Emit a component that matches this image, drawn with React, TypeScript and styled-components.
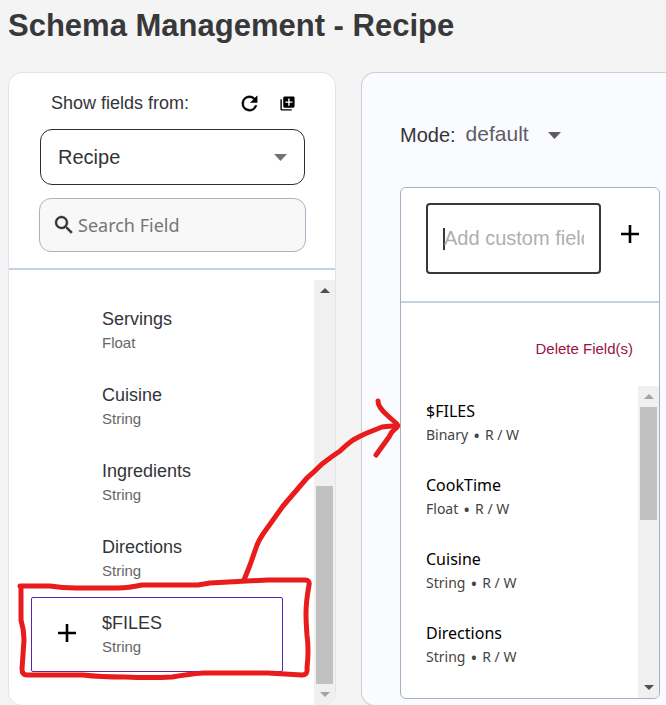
import React from "react";
import styled, { createGlobalStyle } from "styled-components";

const GlobalStyle = createGlobalStyle`
  *, *::before, *::after { box-sizing: border-box; }
  body {
    margin: 0;
    background: #f4f4f4;
    color: #343438;
    font-family: "Liberation Sans", Arial, sans-serif;
  }
  h1, p, ul { margin: 0; padding: 0; }
  button, input, select { font: inherit; color: inherit; margin: 0; }
`;

const Page = styled.div`
  position: relative;
  display: flex;
  flex-direction: column;
  height: 100vh;
  padding-left: 8px;
  overflow: hidden;
`;

const Title = styled.h1`
  flex: none;
  height: 72px;
  padding-top: 8px;
  font-size: 31px;
  line-height: 36px;
  font-weight: 700;
  color: #38383a;
`;

const Columns = styled.div`
  display: grid;
  grid-template-columns: 328px minmax(0, 1fr);
  gap: 25px;
  flex: none;
  height: calc(100vh - 71px);
`;

const SourcePanel = styled.aside`
  display: flex;
  flex-direction: column;
  min-height: 0;
  overflow: hidden;
  background: #fff;
  border: 1px solid #e3e2f1;
  border-radius: 14px;
`;

const SourceHeader = styled.div`
  display: flex;
  flex-direction: column;
  padding: 16px 29px 16px 30px;
  border-bottom: 2px solid #c7d2df;
`;

const SourceTools = styled.div`
  display: flex;
  align-items: center;
  height: 28px;
  padding: 0 7px 0 12px;
  font-size: 18px;
`;

const ToolLabel = styled.label`
  flex: 1;
`;

const IconButton = styled.button<{ $size: number }>`
  display: flex;
  align-items: center;
  justify-content: center;
  flex: none;
  width: ${(p) => p.$size}px;
  height: ${(p) => p.$size}px;
  padding: 0;
  border: 0;
  background: none;
  color: #000;
  cursor: pointer;
`;

const ToolGroup = styled.div`
  display: flex;
  gap: 14px;
`;

const SelectBox = styled.div`
  display: grid;
  align-items: center;
  height: 56px;
  margin: 12px 1px 13px;
  color: #737373;

  > * { grid-area: 1 / 1; }
  > svg { justify-self: end; margin-right: 18px; pointer-events: none; }
`;

const SourceSelect = styled.select`
  appearance: none;
  width: 100%;
  height: 100%;
  padding: 0 40px 0 17px;
  border: 1px solid #263030;
  border-radius: 12px;
  background: #fff;
  color: #343438;
  font-size: 20px;
`;

const SearchBox = styled.label`
  display: flex;
  align-items: center;
  height: 54px;
  gap: 2px;
  padding: 0 12px;
  border: 1px solid #a8b2c3;
  border-radius: 12px;
  background: #f8f8f8;
`;

const SearchInput = styled.input`
  flex: 1;
  min-width: 0;
  padding: 0;
  border: 0;
  outline: 0;
  background: none;
  font-family: "Noto Sans", sans-serif;
  font-size: 18px;
  &::placeholder { color: #767676; opacity: 1; }
`;

const ScrollArea = styled.div<{ $top: number }>`
  display: flex;
  flex: 1;
  min-height: 0;
  margin-top: ${(p) => p.$top}px;
`;

const SourceList = styled.ul`
  display: flex;
  flex-direction: column;
  gap: 1px;
  flex: 1;
  min-width: 0;
  padding: 13px 31px 0 22px;
  overflow: hidden;
  list-style: none;
`;

const SourceRow = styled.li<{ $selected?: boolean }>`
  display: grid;
  grid-template-columns: 70px minmax(0, 1fr);
  align-items: center;
  flex: none;
  height: 75px;
  border: 1px solid ${(p) => (p.$selected ? "#5a24b0" : "transparent")};
  border-radius: 2px;

  > div { grid-column: 2; }
  > button { justify-self: center; margin-bottom: 4px; }
`;

const SourceName = styled.p`
  font-size: 18px;
  line-height: 24px;
`;

const SourceType = styled.p`
  font-size: 15px;
  line-height: 24px;
  color: #666;
`;

const Track = styled.div`
  display: flex;
  flex-direction: column;
  flex: none;
  width: 21px;
  background: #f0f0f0;
`;

const TrackButton = styled.button<{ $dim?: boolean }>`
  display: flex;
  align-items: center;
  justify-content: center;
  flex: none;
  height: 21px;
  padding: 0;
  border: 0;
  background: none;
  color: ${(p) => (p.$dim ? "#a3a3a3" : "#505050")};
`;

const TrackSpace = styled.div<{ $grow: number }>`
  flex: ${(p) => p.$grow} 1 0;
`;

const Thumb = styled.div<{ $grow: number }>`
  flex: ${(p) => p.$grow} 1 0;
  margin: 0 2px;
  background: #c1c1c1;
`;

const SchemaPanel = styled.main`
  display: flex;
  flex-direction: column;
  min-height: 0;
  padding: 46px 6px 6px 38px;
  background: #fafbff;
  border: 1px solid #cfcfd3;
  border-right: 0;
  border-radius: 14px 0 0 14px;
`;

const ModeRow = styled.div`
  display: flex;
  align-items: center;
  height: 32px;
  gap: 10px;
  margin-bottom: 36px;
  font-size: 20px;
`;

const ModeBox = styled.div`
  display: flex;
  align-items: center;
  color: #5f5b66;
`;

const ModeSelect = styled.select`
  appearance: none;
  width: 82px;
  height: 24px;
  padding: 0 0 2px;
  border: 0;
  background: none;
  font-size: 21px;
  line-height: 22px;
`;

const SchemaCard = styled.section`
  display: flex;
  flex: 1;
  flex-direction: column;
  min-height: 0;
  overflow: hidden;
  background: #fff;
  border: 1px solid #a5b1c0;
  border-radius: 6px;
`;

const AddRow = styled.form`
  display: flex;
  align-items: flex-start;
  gap: 16px;
  height: 115px;
  padding: 15px 16px 0 25px;
  border-bottom: 2px solid #c7d2df;

  > button { margin-top: 18px; }
`;

const AddBox = styled.label`
  display: flex;
  align-items: center;
  flex: 1;
  min-width: 0;
  height: 71px;
  padding: 0 15px;
  border: 2px solid #38383a;
  border-radius: 4px;
`;

const Caret = styled.span`
  flex: none;
  width: 2px;
  height: 22px;
  margin-right: -1px;
  background: #38383a;
`;

const AddInput = styled.input`
  width: 100%;
  min-width: 0;
  padding: 0;
  border: 0;
  outline: 0;
  background: none;
  font-size: 20px;
  &::placeholder { color: #afafaf; opacity: 1; }
`;

const DeleteButton = styled.button`
  align-self: flex-end;
  flex: none;
  height: 24px;
  margin: 33px 26px 0 0;
  padding: 0;
  border: 0;
  background: none;
  color: #991347;
  font-size: 15px;
  cursor: pointer;
`;

const SchemaList = styled.ul`
  flex: 1;
  min-width: 0;
  padding: 13px 0 0 25px;
  overflow: hidden;
  list-style: none;
  font-family: "Noto Sans", sans-serif;
`;

const SchemaRow = styled.li`
  height: 74px;
`;

const SchemaName = styled.p`
  font-size: 16px;
  line-height: 24px;
  color: #000;
`;

const SchemaMeta = styled.p`
  display: flex;
  align-items: center;
  gap: 5px;
  font-size: 14px;
  line-height: 24px;
  color: #444;
`;

const Bullet = styled.span`
  font-size: 18px;
`;

const Annotation = styled.svg`
  position: absolute;
  top: 0;
  left: 0;
  pointer-events: none;
`;

const Plus = () => (
  <svg width="18" height="18" viewBox="0 0 18 18" aria-hidden="true">
    <path d="M9 0v18M0 9h18" fill="none" stroke="currentColor" strokeWidth="2.600" />
  </svg>
);

const DropArrow = () => (
  <svg width="13" height="7" viewBox="0 0 13 7" aria-hidden="true">
    <path d="M0 0h13L6.500 7z" fill="currentColor" />
  </svg>
);

const Chevron = ({ up }: { up?: boolean }) => (
  <svg width="10" height="5" viewBox="0 0 10 5" aria-hidden="true">
    <path d={up ? "M0 5h10L5 0z" : "M0 0h10L5 5z"} fill="currentColor" />
  </svg>
);

const Refresh = () => (
  <svg width="23" height="23" viewBox="0 0 24 24" aria-hidden="true">
    <path
      d="M17.650 6.350A7.960 7.960 0 0 0 12 4a8 8 0 1 0 7.730 10h-2.080A6 6 0 1 1 12 6c1.660 0 3.140.690 4.220 1.780L13 11h7V4z"
      fill="currentColor"
      stroke="currentColor"
      strokeWidth="0.500"
    />
  </svg>
);

const CopyPlus = () => (
  <svg width="17" height="17" viewBox="0 0 24 24" aria-hidden="true">
    <path
      d="M4 6H2v14c0 1.100.9 2 2 2h14v-2H4zm16-4H8a2 2 0 0 0-2 2v12c0 1.100.9 2 2 2h12a2 2 0 0 0 2-2V4a2 2 0 0 0-2-2zm-1 9h-4v4h-2v-4H9V9h4V5h2v4h4z"
      fill="currentColor"
    />
  </svg>
);

const SearchIcon = () => (
  <svg width="24" height="24" viewBox="0 0 24 24" aria-hidden="true">
    <path
      d="M15.500 14h-.790l-.280-.270A6.470 6.470 0 0 0 16 9.500 6.500 6.500 0 1 0 9.500 16c1.610 0 3.090-.590 4.230-1.570l.270.280v.790l5 4.990L20.490 19zm-6 0a4.500 4.500 0 1 1 0-9 4.500 4.500 0 0 1 0 9z"
      fill="#343434"
      stroke="#343434"
      strokeWidth="0.400"
    />
  </svg>
);

interface ScrollBarProps {
  before: number;
  thumb: number;
  after: number;
}

const ScrollBar = ({ before, thumb, after }: ScrollBarProps) => (
  <Track>
    <TrackButton type="button" aria-label="Scroll up" $dim={before === 0}>
      <Chevron up />
    </TrackButton>
    <TrackSpace $grow={before} />
    <Thumb $grow={thumb} />
    <TrackSpace $grow={after} />
    <TrackButton type="button" aria-label="Scroll down" $dim={after === 0}>
      <Chevron />
    </TrackButton>
  </Track>
);

const sourceFields = [
  { name: "Servings", type: "Float" },
  { name: "Cuisine", type: "String" },
  { name: "Ingredients", type: "String" },
  { name: "Directions", type: "String" },
  { name: "$FILES", type: "String", selected: true },
];

const schemaFields = [
  { name: "$FILES", type: "Binary" },
  { name: "CookTime", type: "Float" },
  { name: "Cuisine", type: "String" },
  { name: "Directions", type: "String" },
];

export default function App() {
  return (
    <>
      <GlobalStyle />
      <Page>
        <Title>Schema Management - Recipe</Title>
        <Columns>
          <SourcePanel>
            <SourceHeader>
              <SourceTools>
                <ToolLabel htmlFor="source">Show fields from:</ToolLabel>
                <ToolGroup>
                  <IconButton type="button" $size={24} aria-label="Refresh">
                    <Refresh />
                  </IconButton>
                  <IconButton type="button" $size={24} aria-label="Add all fields">
                    <CopyPlus />
                  </IconButton>
                </ToolGroup>
              </SourceTools>
              <SelectBox>
                <SourceSelect id="source" defaultValue="Recipe">
                  <option>Recipe</option>
                </SourceSelect>
                <DropArrow />
              </SelectBox>
              <SearchBox>
                <SearchIcon />
                <SearchInput type="text" aria-label="Search Field" placeholder="Search Field" />
              </SearchBox>
            </SourceHeader>
            <ScrollArea $top={10}>
              <SourceList>
                {sourceFields.map((field) => (
                  <SourceRow key={field.name} $selected={field.selected}>
                    {field.selected && (
                      <IconButton type="button" $size={24} aria-label={`Add ${field.name}`}>
                        <Plus />
                      </IconButton>
                    )}
                    <div>
                      <SourceName>{field.name}</SourceName>
                      <SourceType>{field.type}</SourceType>
                    </div>
                  </SourceRow>
                ))}
              </SourceList>
              <ScrollBar before={185} thumb={198} after={0} />
            </ScrollArea>
          </SourcePanel>

          <SchemaPanel>
            <ModeRow>
              <label htmlFor="mode">Mode:</label>
              <ModeBox>
                <ModeSelect id="mode" defaultValue="default">
                  <option>default</option>
                </ModeSelect>
                <DropArrow />
              </ModeBox>
            </ModeRow>
            <SchemaCard>
              <AddRow onSubmit={(e) => e.preventDefault()}>
                <AddBox>
                  <Caret />
                  <AddInput type="text" aria-label="Add custom field" placeholder="Add custom field" />
                </AddBox>
                <IconButton type="submit" $size={26} aria-label="Add field">
                  <Plus />
                </IconButton>
              </AddRow>
              <DeleteButton type="button">Delete Field(s)</DeleteButton>
              <ScrollArea $top={26}>
                <SchemaList>
                  {schemaFields.map((field) => (
                    <SchemaRow key={field.name}>
                      <SchemaName>{field.name}</SchemaName>
                      <SchemaMeta>
                        <span>{field.type}</span>
                        <Bullet>•</Bullet>
                        <span>R / W</span>
                      </SchemaMeta>
                    </SchemaRow>
                  ))}
                </SchemaList>
                <ScrollBar before={0} thumb={113} after={157} />
              </ScrollArea>
            </SchemaCard>
          </SchemaPanel>
        </Columns>
        <Annotation width="420" height="705" viewBox="0 0 420 705" aria-hidden="true">
          <g fill="none" stroke="#e81c1c" strokeWidth="5" strokeLinecap="round" strokeLinejoin="round">
            <path d="M20 586L50 586Q62 588 76 588L118 588Q128 588 142 585L198 585Q204 584 210 583L268 580L305 580Q310 580 309 585Q306 602 306 613Q306 622 307 635Q309 650 307 668Q308 675 302 675Q285 674 268 673L203 673Q190 674 172 677Q150 678 125 677Q100 677 83 675L27 675Q22 675 22 669L24 640Q24 630 21 620L21 586" />
            <path d="M244 580L250 565L257 545Q259 540 263 534L283 506L307 478Q314 472 322 464Q331 457 340 451Q346 445 353 440Q360 436 367 433L382 427Q388 426 397 426" />
            <path d="M378 401Q378 407 387 415L397 424Q399 426 395 429Q391 432 389 437L376 455" />
          </g>
        </Annotation>
      </Page>
    </>
  );
}
